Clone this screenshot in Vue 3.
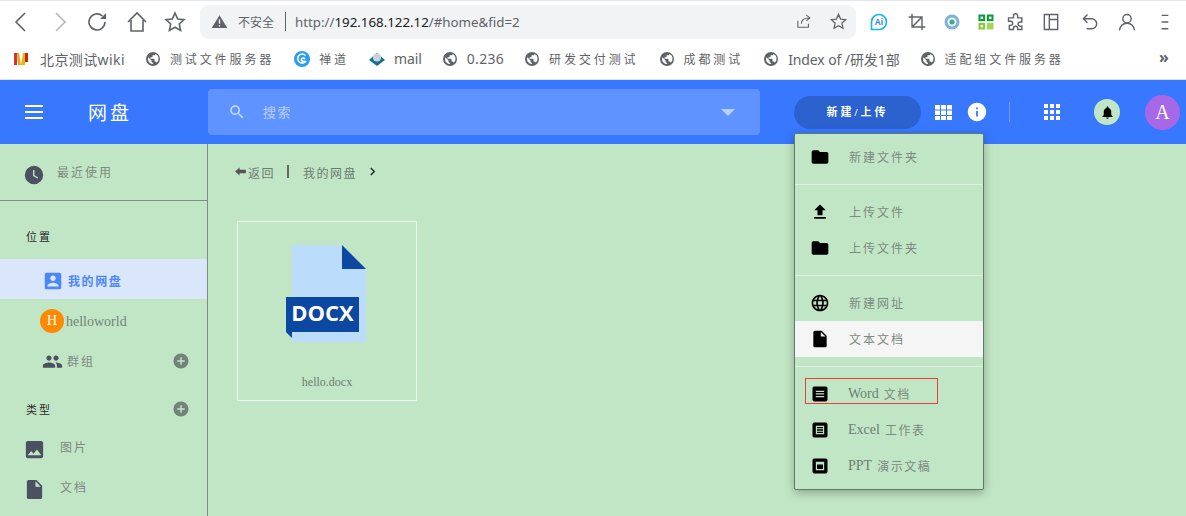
<script setup>
const icons = {
  folder: 'M10 4H4c-1.1 0-1.99.9-1.99 2L2 18c0 1.1.9 2 2 2h16c1.1 0 2-.9 2-2V8c0-1.1-.9-2-2-2h-8l-2-2z',
  upload: 'M9 16h6v-6h4l-7-7-7 7h4zm-4 2h14v2H5z',
  globe: 'M11.99 2C6.47 2 2 6.48 2 12s4.47 10 9.99 10C17.52 22 22 17.52 22 12S17.52 2 11.99 2zm6.93 6h-2.95c-.32-1.25-.78-2.45-1.38-3.56 1.84.63 3.37 1.91 4.33 3.56zM12 4.04c.83 1.2 1.48 2.53 1.91 3.96h-3.82c.43-1.43 1.08-2.76 1.91-3.96zM4.26 14C4.1 13.36 4 12.69 4 12s.1-1.36.26-2h3.38c-.08.66-.14 1.32-.14 2 0 .68.06 1.34.14 2H4.26zm.82 2h2.95c.32 1.25.78 2.45 1.38 3.56-1.84-.63-3.37-1.9-4.33-3.56zm2.95-8H5.08c.96-1.66 2.49-2.93 4.33-3.56C8.81 5.55 8.35 6.75 8.03 8zM12 19.96c-.83-1.2-1.48-2.53-1.91-3.96h3.82c-.43 1.43-1.08 2.76-1.91 3.96zM14.34 14H9.66c-.09-.66-.16-1.32-.16-2 0-.68.07-1.35.16-2h4.68c.09.65.16 1.32.16 2 0 .68-.07 1.34-.16 2zm.25 5.56c.6-1.11 1.06-2.31 1.38-3.56h2.95c-.96 1.65-2.49 2.93-4.33 3.56zM16.36 14c.08-.66.14-1.32.14-2 0-.68-.06-1.34-.14-2h3.38c.16.64.26 1.31.26 2s-.1 1.36-.26 2h-3.38z',
  file: 'M6 2c-1.1 0-1.99.9-1.99 2L4 20c0 1.1.89 2 1.99 2H18c1.1 0 2-.9 2-2V8l-6-6H6zm7 7V3.5L18.5 9H13z',
  word: 'M5 3h14a2 2 0 0 1 2 2v14a2 2 0 0 1-2 2H5a2 2 0 0 1-2-2V5a2 2 0 0 1 2-2zm2 5v1.5h10V8H7zm0 3.2v1.5h10v-1.5H7zm0 3.2v1.5h10v-1.5H7z',
  excel: 'M5 3h14a2 2 0 0 1 2 2v14a2 2 0 0 1-2 2H5a2 2 0 0 1-2-2V5a2 2 0 0 1 2-2zm2 4v10h10V7H7zm1.4 1.4h7.2V10H8.4V8.4zm0 2.8h7.2v1.6H8.4v-1.6zm0 2.8h7.2v1.6H8.4V14z',
  ppt: 'M5 3h14a2 2 0 0 1 2 2v14a2 2 0 0 1-2 2H5a2 2 0 0 1-2-2V5a2 2 0 0 1 2-2zm2 4v10h10V7H7zm1.4 3.2h7.2v5.4H8.4v-5.4z',
  account: 'M3 5v14c0 1.1.89 2 2 2h14c1.1 0 2-.9 2-2V5c0-1.1-.9-2-2-2H5c-1.11 0-2 .9-2 2zm12 4c0 1.66-1.34 3-3 3s-3-1.34-3-3 1.34-3 3-3 3 1.34 3 3zm-9 8c0-2 4-3.1 6-3.1s6 1.1 6 3.1v1H6v-1z',
  group: 'M16 11c1.66 0 2.99-1.34 2.99-3S17.66 5 16 5c-1.66 0-3 1.34-3 3s1.34 3 3 3zm-8 0c1.66 0 2.99-1.34 2.99-3S9.66 5 8 5C6.34 5 5 6.34 5 8s1.34 3 3 3zm0 2c-2.33 0-7 1.17-7 3.5V19h14v-2.5c0-2.33-4.67-3.5-7-3.5zm8 0c-.29 0-.62.02-.97.05 1.16.84 1.97 1.97 1.97 3.45V19h6v-2.5c0-2.33-4.67-3.5-7-3.5z',
  image: 'M21 19V5c0-1.1-.9-2-2-2H5c-1.1 0-2 .9-2 2v14c0 1.1.9 2 2 2h14c1.1 0 2-.9 2-2zM8.5 13.5l2.5 3.01L14.5 12l4.5 6H5l3.5-4.5z',
  bell: 'M12 22c1.1 0 2-.9 2-2h-4c0 1.1.89 2 2 2zm6-6v-5c0-3.07-1.64-5.64-4.5-6.32V4c0-.83-.67-1.5-1.5-1.5s-1.5.67-1.5 1.5v.68C7.63 5.36 6 7.92 6 11v5l-2 2v1h16v-1l-2-2z',
  info: 'M12 2C6.48 2 2 6.48 2 12s4.48 10 10 10 10-4.48 10-10S17.52 2 12 2zm1 15h-2v-6h2v6zm0-8h-2V7h2v2z',
  search: 'M15.5 14h-.79l-.28-.27C15.41 12.59 16 11.11 16 9.5 16 5.91 13.09 3 9.5 3S3 5.91 3 9.5 5.91 16 9.5 16c1.61 0 3.09-.59 4.23-1.57l.27.28v.79l5 4.99L20.49 19l-4.99-5zm-6 0C7.01 14 5 11.99 5 9.5S7.01 5 9.5 5 14 7.01 14 9.5 11.99 14 9.5 14z',
  add: 'M12 2C6.48 2 2 6.48 2 12s4.48 10 10 10 10-4.48 10-10S17.52 2 12 2zm5 11h-4v4h-2v-4H7v-2h4V7h2v4h4v2z',
  clock: 'M12 2a10 10 0 1 0 0 20 10 10 0 0 0 0-20zm-1 4.5h1.5v5.7l4 2.4-.75 1.25L11 13V6.5z',
  globeFill: 'M8 1a7 7 0 1 0 0 14A7 7 0 0 0 8 1zM3 8c0-.6.1-1.2.3-1.7L6.5 9.5v.8c0 .8.7 1.5 1.5 1.5v1.3A5 5 0 0 1 3 8zm8.5 3.6c-.2-.6-.7-1.1-1.4-1.1h-.6V8.5c0-.4-.3-.7-.7-.7H5.5V6.3h1.4c.4 0 .7-.3.7-.7V4.2h1.5c.8 0 1.4-.6 1.4-1.3A5 5 0 0 1 11.5 11.6z'
}

const bookmarks = [
  { label: '北京测试wiki', icon: 'wiki', first: true },
  { label: '测试文件服务器', icon: 'globe', cjk: true },
  { label: '禅道', icon: 'zen', cjk: true },
  { label: 'mail', icon: 'mail' },
  { label: '0.236', icon: 'globe', wide: true },
  { label: '研发交付测试', icon: 'globe', cjk: true },
  { label: '成都测试', icon: 'globe', cjk: true },
  { label: 'Index of /研发1部', icon: 'globe' },
  { label: '适配组文件服务器', icon: 'globe', cjk: true }
]

const menuGroups = [
  [{ icon: 'folder', label: '新建文件夹' }],
  [{ icon: 'upload', label: '上传文件' }, { icon: 'folder', label: '上传文件夹' }],
  [{ icon: 'globe', label: '新建网址' }, { icon: 'file', label: '文本文档', active: true }],
  [{ icon: 'word', latin: 'Word', label: '文档' }, { icon: 'excel', latin: 'Excel', label: '工作表' }, { icon: 'ppt', latin: 'PPT', label: '演示文稿' }]
]
</script>

<template>
  <div class="page">
    <div class="toolbar">
      <button class="tb i-back"><svg viewBox="0 0 24 24"><path d="M16 3 7 12l9 9" /></svg></button>
      <button class="tb i-fwd"><svg viewBox="0 0 24 24"><path d="m8 3 9 9-9 9" /></svg></button>
      <button class="tb i-reload"><svg viewBox="0 0 24 24"><path d="M20 12a8 8 0 1 1-2.6-6" /><path class="fill" d="M21 3v6h-6z" /></svg></button>
      <button class="tb i-home"><svg viewBox="0 0 24 24"><path d="M3 12 12 3l9 9M6 10v11h12V10" /></svg></button>
      <button class="tb i-star"><svg viewBox="0 0 24 24"><path d="m12 3 2.7 6 6.3.7-4.7 4.3 1.3 6.5L12 17.2l-5.6 3.3 1.3-6.5L3 9.7 9.3 9z" /></svg></button>
      <div class="address">
        <svg class="warn" viewBox="0 0 24 24"><path d="M12 3 1 21h22zm-1 6h2v6h-2zm0 8h2v2h-2z" /></svg>
        <span class="insecure">不安全</span>
        <span class="addr-sep"></span>
        <span class="url">http://<b>192.168.122.12</b>/#home&amp;fid=2</span>
        <svg class="addr-share" viewBox="0 0 24 24"><path d="M4 11v9h15v-5M9 15c0-5 4-8 11-8M16 3l5 4-5 4" /></svg>
        <svg class="addr-star" viewBox="0 0 24 24"><path d="m12 3 2.7 6 6.3.7-4.7 4.3 1.3 6.5L12 17.2l-5.6 3.3 1.3-6.5L3 9.7 9.3 9z" /></svg>
      </div>
      <div class="exts">
        <svg class="ext" viewBox="0 0 24 24"><path class="ai" d="M12 3a9 9 0 0 1 9 9 9 9 0 0 1-9 9H3v-9a9 9 0 0 1 9-9z" /><text x="12" y="16" text-anchor="middle" class="ai-t">Ai</text></svg>
        <svg class="ext stroke" viewBox="0 0 24 24"><path d="M6 2v16h16M2 6h16v16M6 18 18 6" /></svg>
        <svg class="ext" viewBox="0 0 24 24"><circle cx="12" cy="12" r="9" fill="#7db4d6" /><circle cx="12" cy="12" r="5.5" fill="#e8f1ee" /><circle cx="12" cy="12" r="3" fill="#3aa7a0" /></svg>
        <svg class="ext" viewBox="0 0 24 24"><rect x="3" y="3" width="8" height="8" fill="#0c9b3b" /><rect x="13" y="3" width="8" height="8" fill="#0c9b3b" /><rect x="3" y="13" width="8" height="8" fill="#8cc63f" /><rect x="13" y="13" width="8" height="8" fill="#a6d55c" /><rect x="5.5" y="5.5" width="3" height="3" fill="#fff" /><rect x="15.5" y="5.5" width="3" height="3" fill="#fff" /><rect x="5.5" y="15.5" width="3" height="3" fill="#fff" /></svg>
        <svg class="ext stroke" viewBox="0 0 24 24"><path d="M9 4.5a2.5 2.5 0 0 1 5 0V7h5v5h-2a2.5 2.5 0 0 0 0 5h2v4h-5v-1.5a2.5 2.5 0 0 0-5 0V21H4v-5h1.5a2.5 2.5 0 0 0 0-5H3V7h6z" /></svg>
        <svg class="ext stroke" viewBox="0 0 24 24"><path d="M4 3h16v18H4zM10 3v18M10 9h10" /></svg>
        <svg class="ext stroke" viewBox="0 0 24 24"><path d="M9 3 4 8l5 5M4 8h10a6 6 0 0 1 0 12H8" /></svg>
        <svg class="ext stroke" viewBox="0 0 24 24"><circle cx="12" cy="8" r="5" /><path d="M3 22c1-6 4-8.5 9-8.5s8 2.5 9 8.5" /></svg>
        <svg class="ext stroke" viewBox="0 0 24 24"><path d="M8 4h8M8 12h8M8 20h8" /></svg>
      </div>
    </div>

    <div class="bookmarks">
      <div v-for="b in bookmarks" :key="b.label" class="bm" :class="{ 'bm-cjk': b.cjk, 'bm-first': b.first, 'bm-wide': b.wide }">
        <svg v-if="b.icon === 'wiki'" class="bm-ico" viewBox="0 0 16 16"><path d="M1 2h3v12H1z" fill="#d9342b" /><path d="M4 2h2l2 12H5z" fill="#f0a020" /><path d="M8 14 10 2h2v12z" fill="#e8b800" /><path d="M12 2h3v9h-3z" fill="#c8241b" /></svg>
        <svg v-else-if="b.icon === 'zen'" class="bm-ico" viewBox="0 0 16 16"><circle cx="8" cy="8" r="8" fill="#2a9df4" /><path d="M11.5 4.5A4.5 4.5 0 1 0 12 10c-1 1-4 1-4.5-1S10 6.5 11 8" fill="none" stroke="#fff" stroke-width="1.6" /></svg>
        <svg v-else-if="b.icon === 'mail'" class="bm-ico" viewBox="0 0 16 16"><path d="M0 9l8-7 8 7-8 6z" fill="#1d6f8f" /><circle cx="8" cy="6.5" r="4" fill="#c8d4d8" /></svg>
        <svg v-else class="bm-ico" viewBox="0 0 16 16"><path :d="icons.globeFill" fill="#5f6368" /></svg>
        <span>{{ b.label }}</span>
      </div>
      <span class="more">»</span>
    </div>

    <header class="appbar">
      <div class="brand">
        <span class="burger"><i></i><i></i><i></i></span>
        <span class="brand-name">网盘</span>
      </div>
      <div class="search">
        <svg class="search-ico" viewBox="0 0 24 24"><path :d="icons.search" /></svg>
        <span class="search-text">搜索</span>
        <span class="search-arrow"></span>
      </div>
      <button class="new-btn">新建/上传</button>
      <svg class="grid3" viewBox="0 0 18 18"><path d="M0 1h5.3v4.8H0zM6.3 1h5.3v4.8H6.3zM12.7 1H18v4.8h-5.3zM0 6.8h5.3v4.8H0zM6.3 6.8h5.3v4.8H6.3zM12.7 6.8H18v4.8h-5.3zM0 12.6h5.3V17H0zM6.3 12.6h5.3V17H6.3zM12.7 12.6H18V17h-5.3z" /></svg>
      <svg class="info" viewBox="0 0 24 24"><path :d="icons.info" /></svg>
      <span class="bar-sep"></span>
      <svg class="apps" viewBox="0 0 16 16"><path d="M0 0h4v4H0zM6 0h4v4H6zM12 0h4v4h-4zM0 6h4v4H0zM6 6h4v4H6zM12 6h4v4h-4zM0 12h4v4H0zM6 12h4v4H6zM12 12h4v4h-4z" /></svg>
      <span class="bell"><svg viewBox="0 0 24 24"><path :d="icons.bell" /></svg></span>
      <span class="avatar">A</span>
    </header>

    <div class="body">
      <aside class="sidebar">
        <div class="recent">
          <svg class="side-ico" viewBox="0 0 24 24"><path :d="icons.clock" fill-rule="evenodd" /></svg>
          <span class="muted">最近使用</span>
        </div>
        <div class="side-title loc">位置</div>
        <div class="side-row active">
          <svg class="row-ico" viewBox="0 0 24 24"><path :d="icons.account" /></svg>
          <span>我的网盘</span>
        </div>
        <div class="side-row user">
          <span class="h-badge">H</span>
          <span class="helloworld">helloworld</span>
        </div>
        <div class="side-row">
          <svg class="row-ico" viewBox="0 0 24 24"><path :d="icons.group" /></svg>
          <span class="muted">群组</span>
          <svg class="plus" viewBox="0 0 24 24"><path :d="icons.add" /></svg>
        </div>
        <div class="side-title type">
          <span>类型</span>
          <svg class="plus" viewBox="0 0 24 24"><path :d="icons.add" /></svg>
        </div>
        <div class="type-row">
          <svg class="side-ico" viewBox="0 0 24 24"><path :d="icons.image" /></svg>
          <span class="muted">图片</span>
        </div>
        <div class="type-row">
          <svg class="side-ico" viewBox="0 0 24 24"><path :d="icons.file" /></svg>
          <span class="muted">文档</span>
        </div>
      </aside>

      <main class="content">
        <div class="crumbs">
          <svg class="back-ico" viewBox="0 0 12 10"><path d="M0 5l5-4.5V3h7v4H5v2.5z" /></svg>
          <span>返回</span>
          <span class="crumb-sep"></span>
          <span>我的网盘</span>
          <svg class="chev" viewBox="0 0 8 10"><path d="M2 1l4 4-4 4" /></svg>
        </div>
        <div class="card">
          <svg class="doc-art" viewBox="0 0 80 97">
            <path d="M6 0h50l24 24v73H6z" fill="#bbdcfa" />
            <path d="M56 0 80 24H56z" fill="#0c47a1" />
            <path d="M0 52h73v35H6v6l-6-6z" fill="#0c47a1" />
            <text x="36.5" y="76" text-anchor="middle" class="doc-t">DOCX</text>
          </svg>
          <div class="fname">hello.docx</div>
        </div>
      </main>
    </div>

    <div class="menu">
      <div class="menu-groups">
        <div v-for="(g, i) in menuGroups" :key="i" class="menu-group">
          <div v-for="m in g" :key="m.label" class="menu-item" :class="{ on: m.active, 'doc-item': m.latin }">
            <svg viewBox="0 0 24 24"><path :d="icons[m.icon]" fill-rule="evenodd" /></svg>
            <span v-if="m.latin" class="latin">{{ m.latin }}</span>
            <span>{{ m.label }}</span>
          </div>
        </div>
      </div>
      <div class="redbox"></div>
    </div>
  </div>
</template>

<style>
html, body { margin: 0; background: #c1e6c5; }
</style>

<style scoped>
.page {
  position: relative;
  width: 1186px;
  height: 516px;
  overflow: hidden;
  display: flex;
  flex-direction: column;
  font-family: "Liberation Serif", "Noto Sans CJK SC", serif;
  background: #c1e6c5;
}
svg { display: block; flex: none; }

.toolbar {
  height: 44px;
  box-sizing: border-box;
  border-top: 1px solid #e3e5e8;
  background: #fff;
  display: flex;
  align-items: center;
  padding: 0 0 2px 9px;
}
.tb {
  width: 38px;
  height: 24px;
  padding: 0;
  margin-right: 1px;
  border: 0;
  background: none;
  display: flex;
  align-items: center;
}
.tb svg { width: 24px; height: 24px; fill: none; stroke: #5f6368; stroke-width: 1.6; }
.tb .fill { fill: #5f6368; stroke: none; }
.i-fwd { width: 36px; }
.i-fwd svg { stroke: #b5b8bc; }
.i-reload { width: 39px; }
.i-home { width: 37px; }
.i-star { width: 25px; margin-right: 12px; }
.address {
  width: 656px;
  height: 34px;
  box-sizing: border-box;
  border-radius: 9px;
  background: #f1f3f4;
  display: flex;
  align-items: center;
  padding: 0 8px 0 11px;
  font-family: "Noto Sans", "Noto Sans CJK SC", sans-serif;
  color: #5f6368;
}
.warn { width: 17px; height: 17px; fill: #5f6368; }
.insecure { margin-left: 10px; font-size: 12px; width: 36px; white-space: nowrap; }
.addr-sep { width: 1px; height: 19px; background: #5f6368; margin-left: 11px; }
.url { margin-left: 9px; font-size: 13.3px; white-space: nowrap; flex: 1; }
.url b { font-weight: 400; color: #202124; }
.addr-share { width: 17px; height: 17px; fill: none; stroke: #5f6368; stroke-width: 1.5; margin-right: 17px; }
.addr-star { width: 19px; height: 19px; fill: none; stroke: #5f6368; stroke-width: 1.6; }
.exts {
  display: flex;
  align-items: center;
  margin-left: 13px;
}
.ext { width: 20px; height: 20px; }
.ext:nth-child(2) { margin-left: 18px; }
.ext:nth-child(3) { margin-left: 15px; }
.ext:nth-child(4) { margin-left: 14px; }
.ext:nth-child(5) { margin-left: 10px; }
.ext:nth-child(6) { margin-left: 15px; }
.ext:nth-child(7) { margin-left: 19px; }
.ext:nth-child(8) { margin-left: 17px; }
.ext:nth-child(9) { margin-left: 18px; }
.ext.stroke { fill: none; stroke: #5f6368; stroke-width: 1.7; }
.ai { fill: #fff; stroke: #16b7e8; stroke-width: 2; }
.ai-t { font: 700 10px "Liberation Sans", sans-serif; fill: #1e7fe0; }

.bookmarks {
  height: 36px;
  box-sizing: border-box;
  border-bottom: 1px solid #dfe1e5;
  background: #fff;
  display: flex;
  align-items: center;
  gap: 20px;
  padding: 0 0 6px 13px;
  font-family: "Noto Sans", "Noto Sans CJK SC", sans-serif;
  font-size: 14px;
  color: #5f6368;
  position: relative;
}
.bm { display: flex; align-items: center; gap: 9px; white-space: nowrap; letter-spacing: -0.1px; }
.bm-first { gap: 11px; letter-spacing: 0.4px; }
.bm-wide { letter-spacing: 0.3px; }
.bm-cjk { font-size: 12px; letter-spacing: 2.9px; }
.bm-ico { width: 16px; height: 16px; }
.more { position: absolute; left: 1159px; top: 3px; font-size: 16px; line-height: 20px; font-weight: 700; }

.appbar {
  height: 64px;
  flex: none;
  background: #3778ff;
  display: flex;
  align-items: center;
}
.brand { width: 208px; flex: none; display: flex; align-items: center; box-sizing: border-box; padding-left: 25px; }
.burger { display: flex; flex-direction: column; gap: 4px; width: 18px; }
.burger i { height: 2px; background: #fff; display: block; }
.brand-name { margin: -2px 0 0 45px; color: #fff; font-size: 19px; letter-spacing: 3px; }
.search {
  width: 552px;
  height: 46px;
  flex: none;
  border-radius: 4px;
  background: #5f93ff;
  display: flex;
  align-items: center;
  box-sizing: border-box;
  padding: 0 25px 0 20px;
  color: #b9d0ff;
  font-size: 13px;
}
.search-ico { width: 18px; height: 18px; fill: #c6d9ff; }
.search-text { margin: -2px 0 0 17px; letter-spacing: 1.5px; flex: 1; }
.search-arrow { width: 0; height: 0; border: 7px solid transparent; border-top-color: #b9d0ff; border-bottom: 0; }
.new-btn {
  margin-left: 34px;
  width: 127px;
  height: 33px;
  flex: none;
  border: 0;
  border-radius: 17px;
  background: #2b62ce;
  color: #fff;
  font-family: inherit;
  font-size: 11px;
  font-weight: 700;
  letter-spacing: 3px;
  padding: 0 0 2px;
}
.grid3 { width: 17px; height: 17px; margin-left: 14px; fill: #fff; }
.info { width: 22px; height: 22px; margin-left: 14px; fill: #fff; }
.bar-sep { width: 1px; height: 20px; background: #6d9cff; margin-left: 21px; }
.apps { width: 16px; height: 16px; margin-left: 34px; fill: #fff; }
.bell { width: 26px; height: 26px; margin-left: 34px; border-radius: 50%; background: #c1e6c5; display: flex; align-items: center; justify-content: center; }
.bell svg { width: 15px; height: 15px; fill: #000; }
.avatar { width: 35px; height: 35px; margin-left: 25px; border-radius: 50%; background: #a768e8; color: #fff; font-size: 20px; text-align: center; line-height: 35px; }

.body { flex: 1; display: flex; min-height: 0; }
.sidebar {
  width: 208px;
  flex: none;
  box-sizing: border-box;
  border-right: 1px solid #7e8f82;
  font-size: 12px;
  color: #3c4043;
}
.muted { color: #7c8a80; letter-spacing: 2px; }
.recent {
  height: 57px;
  box-sizing: border-box;
  border-bottom: 1px solid #7e8f82;
  display: flex;
  align-items: flex-start;
  padding: 20px 0 0 23px;
}
.side-ico { width: 22px; height: 22px; fill: #4b5160; }
.recent .muted { margin-left: 12px; line-height: 18px; }
.side-title { color: #2b2b2b; font-size: 11px; letter-spacing: 2px; padding-left: 26px; }
.loc { height: 58px; line-height: 72px; }
.side-row { height: 40px; box-sizing: border-box; padding: 4px 0 0 42px; display: flex; align-items: center; position: relative; }
.side-row.active { background: #dae6fa; color: #4d87f5; font-weight: 700; letter-spacing: 1.6px; }
.row-ico { width: 21px; height: 21px; fill: #4b5160; margin-right: 4px; }
.side-row.active .row-ico { fill: #4d87f5; width: 22px; height: 22px; }
.side-row.user { padding-left: 40px; }
.h-badge { width: 24px; height: 24px; border-radius: 50%; background: #ff8a00; color: #fff; font-size: 14px; text-align: center; line-height: 24px; margin-right: 2px; }
.helloworld { font-size: 14px; color: #74837a; margin-top: 2px; }
.plus { position: absolute; right: 17px; width: 18px; height: 18px; fill: #74837a; }
.type { position: relative; height: 48px; display: flex; align-items: center; padding-top: 12px; box-sizing: border-box; }
.type .plus { top: 21px; }
.type-row { height: 39.5px; box-sizing: border-box; display: flex; align-items: flex-start; padding: 11px 0 0 23px; }
.type-row .side-ico { width: 23px; height: 23px; }
.type-row .muted { margin: 1px 0 0 14px; line-height: 18px; }

.content { flex: 1; padding: 0 0 0 29px; }
.crumbs {
  height: 57px;
  display: flex;
  align-items: center;
  color: #6d7a71;
  font-size: 12px;
  letter-spacing: 1.5px;
  box-sizing: border-box;
}
.back-ico { width: 11px; height: 9px; fill: #555; margin: -2px 2px 0 -2px; }
.crumb-sep { width: 2px; height: 13px; background: #666; margin: -2px 14px 0 12px; }
.chev { width: 7px; height: 9px; margin: -2px 0 0 12px; fill: none; stroke: #222; stroke-width: 1.6; }
.card {
  margin-top: 20px;
  width: 180px;
  height: 180px;
  box-sizing: border-box;
  border: 1px solid #edf3ee;
  display: flex;
  flex-direction: column;
  align-items: center;
}
.doc-art { width: 80px; height: 97px; margin: 23px 0 0 -3px; }
.doc-t { font: 700 22px "Open Sans", sans-serif; fill: #fff; }
.fname { margin-top: 33px; font-size: 12px; color: #6e7c72; line-height: 14px; }

.menu {
  position: absolute;
  left: 794px;
  top: 133px;
  width: 190px;
  box-sizing: border-box;
  border: 1px solid #5f7a66;
  border-radius: 2px;
  background: #c1e6c5;
  box-shadow: 0 3px 10px rgba(0, 0, 0, .28);
  padding: 5px 0;
}
.menu-group { padding: 9px 0; border-bottom: 1px solid #e4eee6; }
.menu-group:first-child { padding-top: 0; }
.menu-group:last-child { border-bottom: 0; padding-bottom: 0; }
.menu-item {
  height: 36px;
  display: flex;
  align-items: center;
  padding-left: 15px;
  color: #7c8a80;
  font-size: 12px;
  letter-spacing: 2px;
  white-space: nowrap;
}
.menu-item svg { width: 20px; height: 20px; fill: #000; margin-right: 19px; }
.menu-item.on { background: #f5f5f5; }
.menu-item.doc-item { letter-spacing: 1.5px; }
.menu-item.doc-item svg { margin-right: 18px; }
.latin { font-size: 14px; letter-spacing: 0; margin-right: 5px; color: #6f7d73; }
.redbox { position: absolute; left: 10px; top: 244px; width: 133px; height: 26px; box-sizing: border-box; border: 1px solid #ee3b3b; }
</style>
